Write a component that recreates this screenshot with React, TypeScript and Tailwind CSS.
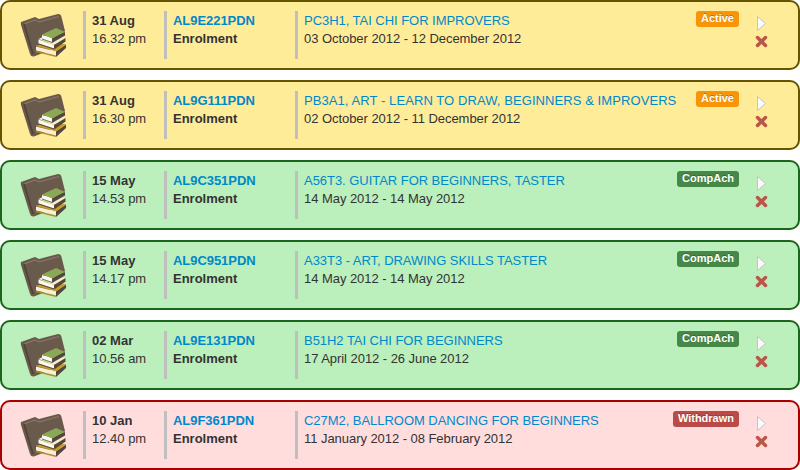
const rows = [
  { tone: "y", day: "31 Aug", time: "16.32 pm", code: "AL9E221PDN", title: "PC3H1, TAI CHI FOR IMPROVERS", range: "03 October 2012 - 12 December 2012", badge: "Active", wide: false },
  { tone: "y", day: "31 Aug", time: "16.30 pm", code: "AL9G111PDN", title: "PB3A1, ART - LEARN TO DRAW, BEGINNERS & IMPROVERS", range: "02 October 2012 - 11 December 2012", badge: "Active", wide: true },
  { tone: "g", day: "15 May", time: "14.53 pm", code: "AL9C351PDN", title: "A56T3. GUITAR FOR BEGINNERS, TASTER", range: "14 May 2012 - 14 May 2012", badge: "CompAch", wide: false },
  { tone: "g", day: "15 May", time: "14.17 pm", code: "AL9C951PDN", title: "A33T3 - ART, DRAWING SKILLS TASTER", range: "14 May 2012 - 14 May 2012", badge: "CompAch", wide: false },
  { tone: "g", day: "02 Mar", time: "10.56 am", code: "AL9E131PDN", title: "B51H2 TAI CHI FOR BEGINNERS", range: "17 April 2012 - 26 June 2012", badge: "CompAch", wide: false },
  { tone: "r", day: "10 Jan", time: "12.40 pm", code: "AL9F361PDN", title: "C27M2, BALLROOM DANCING FOR BEGINNERS", range: "11 January 2012 - 08 February 2012", badge: "Withdrawn", wide: false },
];

const card: Record<string, string> = {
  y: "bg-[#ffec98] border-[#665500]",
  g: "bg-[#bbefbb] border-[#1a661a]",
  r: "bg-[#ffdddd] border-[#aa0000]",
};
const badge: Record<string, string> = {
  y: "bg-[#f89406]",
  g: "bg-[#468847]",
  r: "bg-[#b94a48]",
};

function BooksIcon() {
  return (
    <svg width="47" height="45" viewBox="20 13 47 45" className="shrink-0">
      <path d="M21 22 L35 17 L39 19 L58 14 Q61 14 61.500 17 L65 31 L50 50 L34 56.500 Q31 57 30 54 L21 25 Q20.500 23 21 22 Z" fill="#6a5a4c" />
      <path d="M24 24 L35 20 L39 22 L59 16.500" fill="none" stroke="#8d7d6e" strokeWidth="1" />
      <path d="M24 24 L33 54" fill="none" stroke="#4d4136" strokeWidth="1.500" />
      <path d="M36 46 L43 43 L66 44 L56 51.500 Z" fill="#c89a28" />
      <path d="M36 46.500 L56 51.500 L56 55 L36 50.500 Z" fill="#f5efdc" />
      <path d="M35.500 50.500 L56 55.500 L56 57 L36 52 Z" fill="#b8891f" />
      <path d="M56 51.500 L66 44.500 L66 48 L56 57 Z" fill="#54473a" />
      <path d="M38.500 39 L45 36 L65.500 38 L54 45 Z" fill="#f2ecd8" />
      <path d="M38.500 39.500 L54 45 L54 48.500 L38.500 43.500 Z" fill="#fbf8ee" />
      <path d="M38.500 43.500 L54 48.500 L54 49.500 L38.500 44.500 Z" fill="#54473a" />
      <path d="M54 45 L65.500 38 L65.500 41.500 L54 49.500 Z" fill="#54473a" />
      <path d="M42 34.500 L56 28 L65 32 L52 38.500 Z" fill="#8aa855" />
      <path d="M42 35 L52 38.500 L52 42 L42 38.500 Z" fill="#fbf8ee" />
      <path d="M42 38.500 L52 42 L52 43 L42 39.500 Z" fill="#5f7a35" />
      <path d="M52 38.500 L65 32 L65 35.500 L52 43 Z" fill="#54473a" />
    </svg>
  );
}

function PlayIcon() {
  return (
    <svg width="9" height="15" viewBox="0 0 9 15">
      <path d="M0.500 0.500 L8.500 7.500 L0.500 14.500 Z" fill="#fafafa" stroke="#c4c4c4" strokeWidth="1" strokeLinejoin="round" />
    </svg>
  );
}

function CrossIcon() {
  return (
    <svg width="13" height="13" viewBox="0 0 13 13">
      <path d="M2.500 2.500 L10.500 10.500 M10.500 2.500 L2.500 10.500" stroke="#b9584a" strokeWidth="3.500" strokeLinecap="round" />
    </svg>
  );
}

function Sep() {
  return <div className="w-[3px] h-12 bg-[#bfbfbf] shrink-0" />;
}

export default function App() {
  return (
    <div className="w-[800px] h-[470px] bg-white overflow-hidden flex flex-col gap-2.5 font-['Liberation_Sans',Arial,sans-serif] text-[13px] leading-[18px] text-[#333333]">
      {rows.map((r) => (
        <div key={r.code} className={`h-[70px] shrink-0 flex items-start border-2 rounded-[10px] pl-[18px] pt-[9px] ${card[r.tone]}`}>
          <div className="w-[63px] shrink-0 pt-[2px]"><BooksIcon /></div>
          <Sep />
          <div className="w-[78px] shrink-0 pl-[6px] pt-px">
            <div className="font-bold">{r.day}</div>
            <div>{r.time}</div>
          </div>
          <Sep />
          <div className="w-[128px] shrink-0 pl-[6px] pt-px">
            <div className="font-bold text-[#0088cc] tracking-[-0.05px]">{r.code}</div>
            <div className="font-bold">Enrolment</div>
          </div>
          <Sep />
          <div className="flex-1 min-w-0 pl-[6px] pt-px whitespace-nowrap">
            <div className={r.wide ? "text-[#0088cc] tracking-[0.08px]" : "text-[#0088cc] tracking-[-0.04px]"}>{r.title}</div>
            <div className="tracking-[-0.05px]">{r.range}</div>
          </div>
          <span className={`mr-[15px] shrink-0 h-[16px] px-[5px] rounded-[3px] text-white font-bold text-[11px] leading-[14px] [text-shadow:0_-1px_0_rgba(0,0,0,0.25)] ${badge[r.tone]}`}>
            {r.badge}
          </span>
          <div className="w-[14px] mr-[30px] shrink-0 flex flex-col items-center gap-[4px] pt-[5px]">
            <PlayIcon />
            <CrossIcon />
          </div>
        </div>
      ))}
    </div>
  );
}
